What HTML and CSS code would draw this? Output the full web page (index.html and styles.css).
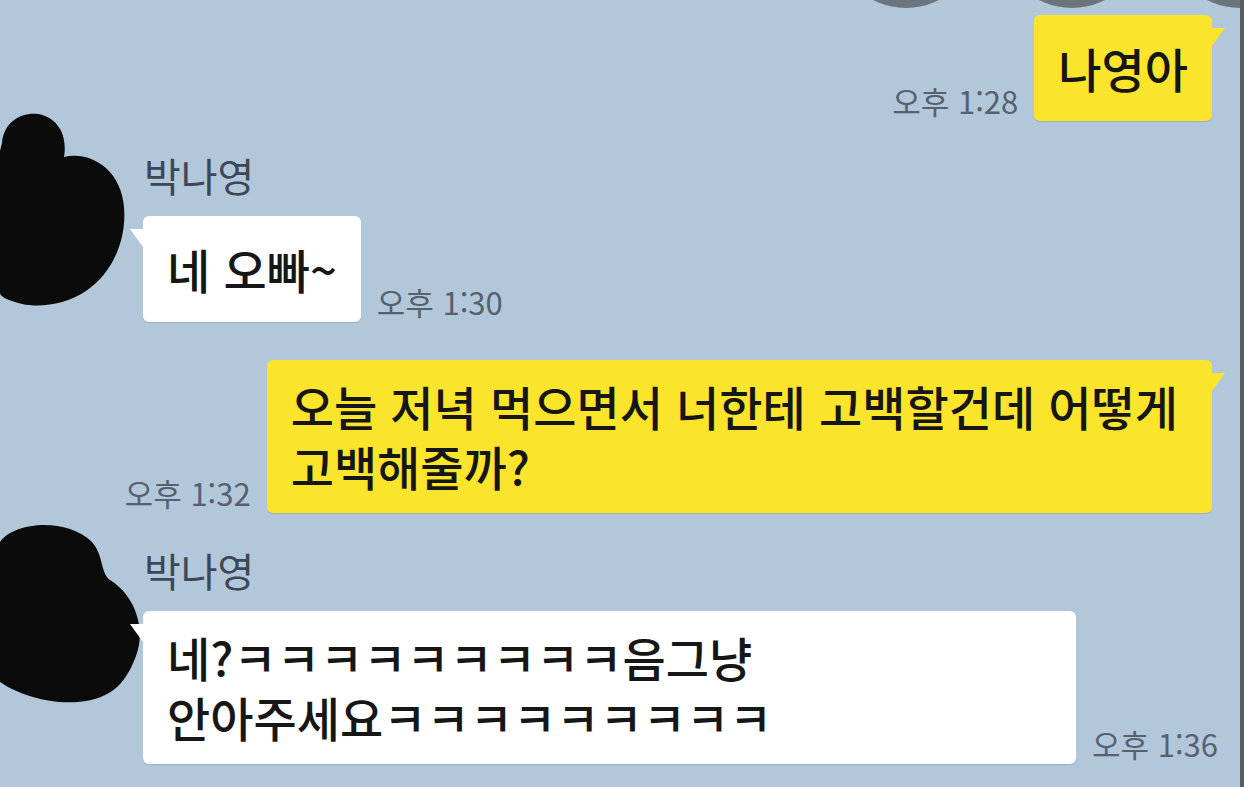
FILE: index.html
```html
<!DOCTYPE html>
<html lang="ko">
<head>
  <meta charset="UTF-8" />
  <title>박나영</title>
  <link rel="stylesheet" href="styles.css">
</head>
<body>
  <div class="chat">
    <div class="top-icons">
      <span class="circle c1"></span>
      <span class="circle c2"></span>
      <span class="circle c3"></span>
    </div>

    <div class="msg mine first">
      <span class="time">오후 1:28</span>
      <div class="bubble yellow"><p>나영아</p></div>
    </div>

    <div class="msg theirs second">
      <div class="avatar a1">
        <svg width="130" height="200" viewBox="0 0 130 200">
          <path d="M2,32 C4,10 22,1 38,3 C56,6 68,22 64,46 C90,40 121,58 124,96 C127,132 110,164 86,180 C66,193 42,197 22,193 C10,190 0,186 0,182 L0,40 Z" fill="#0b0b0b"/>
        </svg>
      </div>
      <div class="body">
        <div class="name">박나영</div>
        <div class="line">
          <div class="bubble white"><p>네 오빠~</p></div>
          <span class="time">오후 1:30</span>
        </div>
      </div>
    </div>

    <div class="msg mine third">
      <span class="time">오후 1:32</span>
      <div class="bubble yellow long"><p>오늘 저녁 먹으면서 너한테 고백할건데 어떻게<br>고백해줄까?</p></div>
    </div>

    <div class="msg theirs fourth">
      <div class="avatar a2">
        <svg width="145" height="185" viewBox="0 0 145 185">
          <path d="M0,22 C14,2 66,-3 92,22 C104,36 100,52 110,60 C136,76 146,110 136,136 C126,162 114,176 86,181 C56,186 20,176 0,162 Z" fill="#0b0b0b"/>
        </svg>
      </div>
      <div class="body">
        <div class="name">박나영</div>
        <div class="line wide">
          <div class="bubble white fill"><p>네?ㅋㅋㅋㅋㅋㅋㅋㅋㅋ음그냥<br>안아주세요ㅋㅋㅋㅋㅋㅋㅋㅋㅋ</p></div>
          <span class="time">오후 1:36</span>
        </div>
      </div>
    </div>
  </div>
</body>
</html>
```

FILE: styles.css
```css
body {
  margin: 0;
  background: #b3c7db;
  font-family: "Noto Sans CJK KR", "Noto Sans", sans-serif;
  word-break: keep-all;
  overflow: hidden;
}
.chat {
  position: relative;
  height: 787px;
  padding-top: 15px;
  box-sizing: border-box;
  border-right: 4px solid #585e65;
}
.top-icons {
  position: absolute;
  top: 0;
  left: 0;
  right: 0;
  height: 10px;
  overflow: hidden;
}
.circle {
  position: absolute;
  top: -136px;
  width: 144px;
  height: 144px;
  border-radius: 50%;
  background: #6c747e;
}
.c1 { left: 834px; }
.c2 { left: 1000px; }
.c3 { left: 1168px; }

.msg.mine {
  display: flex;
  justify-content: flex-end;
  align-items: flex-end;
  gap: 16px;
  padding-right: 28px;
}
.msg.theirs {
  display: flex;
  align-items: flex-start;
}
.second { margin-top: 30px; }
.third { margin-top: 38px; }
.fourth { margin-top: 33px; }

.avatar {
  width: 143px;
  flex: none;
}
.avatar svg { display: block; }
.a1 svg { margin-top: -40px; }
.a2 svg { margin-top: -26px; }

.body {
  flex: 1;
  min-width: 0;
}
.name {
  font-size: 40px;
  line-height: 48px;
  color: #3e4755;
  margin: 0 0 17px 1px;
}
.line {
  display: flex;
  align-items: flex-end;
  gap: 16px;
}
.line.wide { padding-right: 22px; }

.bubble {
  position: relative;
  box-sizing: border-box;
  min-height: 106px;
  display: flex;
  align-items: center;
  padding: 16px 24px 17px;
  border-radius: 6px;
  font-size: 47px;
  line-height: 60px;
  font-weight: 500;
  color: #161616;
  box-shadow: 0 1px 1px rgba(60, 70, 80, 0.18);
}
.bubble p { margin: 0; }
.yellow { background: #fbe52c; }
.yellow::after {
  content: "";
  position: absolute;
  right: -13px;
  top: 13px;
  border-top: 18px solid #fbe52c;
  border-right: 13px solid transparent;
}
.white { background: #ffffff; }
.white::after {
  content: "";
  position: absolute;
  left: -13px;
  top: 13px;
  border-top: 18px solid #ffffff;
  border-left: 13px solid transparent;
}
.long { padding-right: 34px; }
.fill { flex: 1; }

.time {
  font-size: 31px;
  line-height: 34px;
  color: #56606e;
  margin-bottom: 3px;
  white-space: nowrap;
}
```
